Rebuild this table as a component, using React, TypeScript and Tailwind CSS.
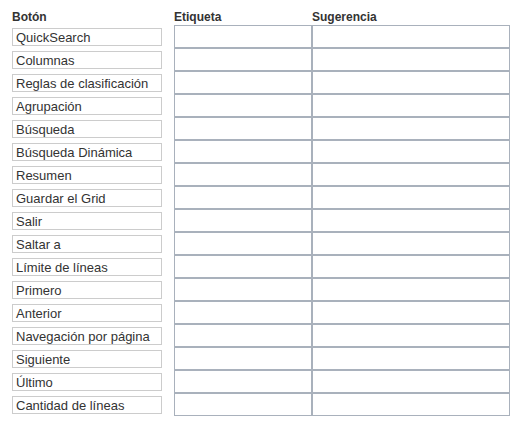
import React from "react";

const rows = [
  "QuickSearch",
  "Columnas",
  "Reglas de clasificación",
  "Agrupación",
  "Búsqueda",
  "Búsqueda Dinámica",
  "Resumen",
  "Guardar el Grid",
  "Salir",
  "Saltar a",
  "Límite de líneas",
  "Primero",
  "Anterior",
  "Navegación por página",
  "Siguiente",
  "Último",
  "Cantidad de líneas",
];

export default function App() {
  return (
    <div
      className="w-[523px] h-[425px] bg-white pt-[10px] pl-[12px] text-[#333]"
      style={{ fontFamily: '"Liberation Sans", Arial, sans-serif' }}
    >
      <div className="flex h-[15px] items-center font-bold leading-[15px] text-[12px]">
        <div className="w-[162px]">Botón</div>
        <div className="w-[138px]">Etiqueta</div>
        <div className="w-[198px]">Sugerencia</div>
      </div>
      <div className="flex flex-col text-[13px]">
        {rows.map((r) => (
          <div key={r} className="flex h-[23px] items-center">
            <div className="w-[150px] h-[18px] border border-[#cccccc] pl-[3px] leading-[17px] mr-[12px] whitespace-nowrap overflow-hidden">
              {r}
            </div>
            <input className="w-[138px] h-[23px] border border-[#a9b1bc] bg-white outline-none" />
            <input className="w-[198px] h-[23px] border border-[#a9b1bc] bg-white outline-none" />
          </div>
        ))}
      </div>
    </div>
  );
}
